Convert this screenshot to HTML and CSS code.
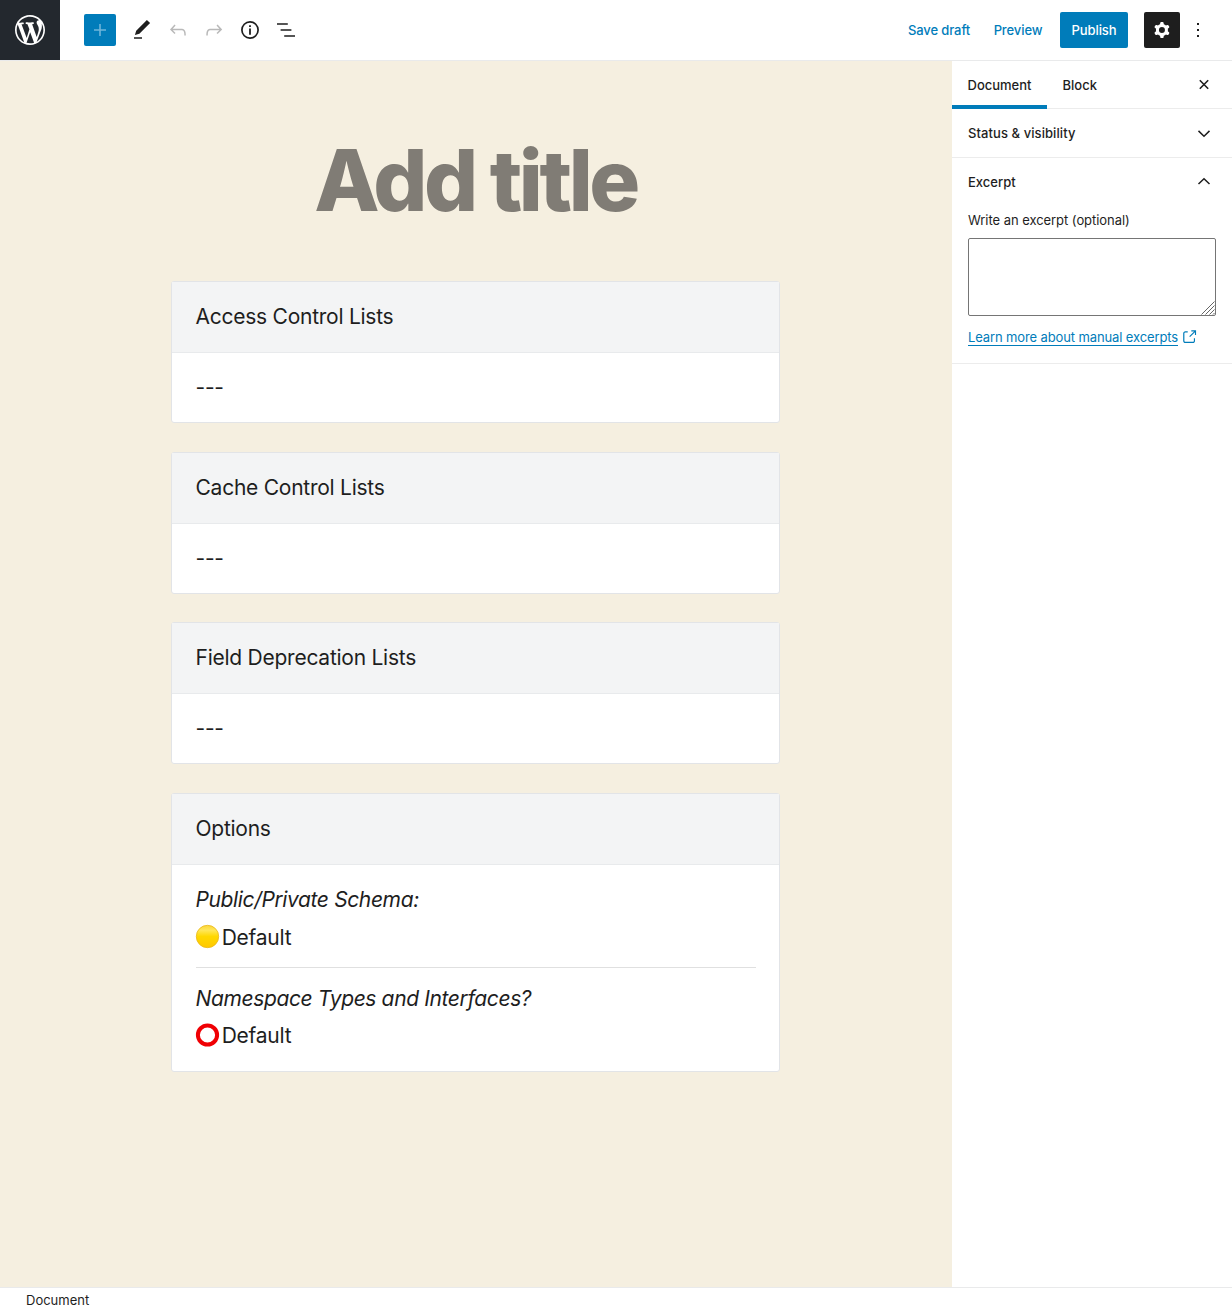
FILE: index.html
```html
<!DOCTYPE html>
<html lang="en">
<head>
<meta charset="utf-8">
<title>Edit post</title>
<link rel="stylesheet" href="styles.css">
</head>
<body>
<div class="editor">
  <header class="topbar">
    <a class="logo"><svg width="36" height="36" viewBox="-2 -2 24 24"><path d="M20 10c0-5.51-4.49-10-10-10C4.48 0 0 4.49 0 10c0 5.52 4.48 10 10 10 5.51 0 10-4.48 10-10zM7.78 15.37L4.37 6.22c.55-.02 1.17-.08 1.17-.08.5-.06.44-1.13-.06-1.11 0 0-1.45.11-2.37.11-.18 0-.37 0-.58-.01C4.12 2.69 6.87 1.11 10 1.11c2.33 0 4.45.87 6.05 2.34-.68-.11-1.65.39-1.65 1.58 0 .74.45 1.36.9 2.1.35.61.55 1.36.55 2.46 0 1.49-1.4 5-1.4 5l-3.03-8.37c.54-.02.82-.17.82-.17.5-.05.44-1.25-.06-1.22 0 0-1.44.12-2.38.12-.87 0-2.33-.12-2.33-.12-.5-.03-.56 1.2-.06 1.22l.92.08 1.26 3.41zM17.41 10c.24-.64.74-1.87.43-4.25.7 1.29 1.05 2.71 1.05 4.25 0 3.29-1.73 6.24-4.4 7.78.97-2.59 1.94-5.2 2.92-7.78zM6.1 18.09C3.12 16.65 1.11 13.53 1.11 10c0-1.3.23-2.48.72-3.59C3.25 10.3 4.67 14.2 6.1 18.09zm4.03-6.63l2.58 6.98c-.86.29-1.76.45-2.71.45-.79 0-1.57-.11-2.29-.33.81-2.38 1.62-4.74 2.42-7.1z"/></svg></a>
    <div class="tools">
      <button class="tool inserter"><svg width="24" height="24" viewBox="0 0 24 24"><path d="M18 11.2h-5.2V6h-1.6v5.2H6v1.6h5.2V18h1.6v-5.2H18z"/></svg></button>
      <button class="tool"><svg width="24" height="24" viewBox="0 0 24 24"><path d="M20.1 5.1L16.9 2 6.2 12.7l-1.3 4.4 4.5-1.3L20.1 5.1zM4 20.8h8v-1.5H4v1.5z"/></svg></button>
      <button class="tool disabled"><svg width="24" height="24" viewBox="0 0 24 24"><path d="M18.3 11.7c-.6-.6-1.4-.9-2.3-.9H6.7l2.9-3.3-1.1-1-4.5 5L8.5 16l1-1-2.7-2.7H16c.5 0 .9.2 1.3.5 1 1 1 3.4 1 4.5v.3h1.5v-.2c0-1.5 0-4.3-1.5-5.7z"/></svg></button>
      <button class="tool disabled"><svg width="24" height="24" viewBox="0 0 24 24"><path d="M15.6 6.5l-1.1 1 2.9 3.3H8c-.9 0-1.7.3-2.3.9-1.4 1.5-1.4 4.2-1.4 5.6v.2h1.5v-.3c0-1.1 0-3.5 1-4.5.3-.3.7-.5 1.3-.5h9.2L14.5 15l1.1 1.1 4.6-4.6-4.6-5z"/></svg></button>
      <button class="tool"><svg width="24" height="24" viewBox="0 0 24 24"><circle cx="12" cy="12" r="8.1" fill="none" stroke="currentColor" stroke-width="1.7"/><path d="M11.1 7.2h1.8V9h-1.8zM11.1 10.6h1.8v6.2h-1.8z"/></svg></button>
      <button class="tool"><svg width="24" height="24" viewBox="0 0 24 24"><path d="M13.8 5.2H3v1.5h10.8V5.2zm-3.6 12v1.5H21v-1.5H10.2zm7.2-6H6.6v1.5h10.8v-1.5z"/></svg></button>
    </div>
    <div class="actions">
      <button class="link save">Save draft</button>
      <button class="link preview">Preview</button>
      <button class="publish">Publish</button>
      <button class="cog"><svg width="24" height="24" viewBox="0 0 24 24"><path fill-rule="evenodd" d="M10.289 4.836A1 1 0 0111.275 4h1.306a1 1 0 01.987.836l.244 1.466c.787.26 1.503.679 2.108 1.218l1.393-.522a1 1 0 011.216.437l.653 1.13a1 1 0 01-.23 1.273l-1.148.944a6.025 6.025 0 010 2.435l1.149.946a1 1 0 01.23 1.272l-.653 1.13a1 1 0 01-1.216.437l-1.394-.522c-.605.54-1.32.958-2.108 1.218l-.244 1.466a1 1 0 01-.987.836h-1.306a1 1 0 01-.986-.836l-.244-1.466a5.995 5.995 0 01-2.108-1.218l-1.394.522a1 1 0 01-1.217-.436l-.653-1.131a1 1 0 01.23-1.272l1.149-.946a6.026 6.026 0 010-2.435l-1.148-.944a1 1 0 01-.23-1.272l.653-1.131a1 1 0 011.217-.437l1.393.522a5.994 5.994 0 012.108-1.218l.244-1.466zM14.929 12a3 3 0 11-6 0 3 3 0 016 0z"/></svg></button>
      <button class="more"><svg width="24" height="24" viewBox="0 0 24 24"><path d="M11 5h2v2h-2zM11 11h2v2h-2zM11 17h2v2h-2z"/></svg></button>
    </div>
  </header>

  <div class="body">
    <main class="canvas">
      <h1 class="title">Add title</h1>
      <section class="card">
        <h2 class="card-head">Access Control Lists</h2>
        <div class="card-body">---</div>
      </section>
      <section class="card">
        <h2 class="card-head">Cache Control Lists</h2>
        <div class="card-body">---</div>
      </section>
      <section class="card">
        <h2 class="card-head">Field Deprecation Lists</h2>
        <div class="card-body">---</div>
      </section>
      <section class="card">
        <h2 class="card-head">Options</h2>
        <div class="card-body options">
          <em>Public/Private Schema:</em>
          <p class="value"><svg class="dot" width="24" height="24" viewBox="0 0 24 24"><defs><linearGradient id="sun" x1="0" y1="0" x2="0" y2="1"><stop offset="0" stop-color="#fbd63a"/><stop offset=".22" stop-color="#ffe75a"/><stop offset=".5" stop-color="#ffd800"/><stop offset="1" stop-color="#ffc800"/></linearGradient></defs><circle cx="12.500" cy="11.500" r="11.200" fill="url(#sun)" stroke="#eab71a" stroke-width=".8"/></svg>Default</p>
          <hr>
          <em>Namespace Types and Interfaces?</em>
          <p class="value"><svg class="dot" width="24" height="24" viewBox="0 0 24 24"><circle cx="12.500" cy="12" r="9.600" fill="none" stroke="#f00004" stroke-width="4"/></svg>Default</p>
        </div>
      </section>
    </main>

    <aside class="sidebar">
      <div class="tabs">
        <button class="tab active">Document</button>
        <button class="tab">Block</button>
        <button class="close"><svg width="24" height="24" viewBox="0 0 24 24"><path d="M7.8 7.3l8.4 8.4M16.2 7.3l-8.400 8.400" stroke="currentColor" stroke-width="1.6"/></svg></button>
      </div>
      <div class="panel status">
        <h2 class="panel-head">Status &amp; visibility <svg width="24" height="24" viewBox="0 0 24 24"><path d="M17.500 9.900L12 15.200l-5.500-5.300" fill="none" stroke="currentColor" stroke-width="1.5"/></svg></h2>
      </div>
      <div class="panel excerpt">
        <h2 class="panel-head">Excerpt <svg width="24" height="24" viewBox="0 0 24 24"><path d="M6.500 14L12 8.700l5.500 5.300" fill="none" stroke="currentColor" stroke-width="1.5"/></svg></h2>
        <label class="label" for="excerpt">Write an excerpt (optional)</label>
        <div class="field">
          <textarea id="excerpt"></textarea>
          <svg class="grip" width="14" height="14" viewBox="0 0 14 14"><path d="M.5 13.5l13-13M4.5 13.5l9-9M8.5 13.5l5-5M12 13.5l1.500-1.500" fill="none" stroke="#666" stroke-width="1"/></svg>
        </div>
        <div class="learn"><a>Learn more about manual excerpts</a><svg width="18.200" height="18.200" viewBox="0 0 24 24"><path d="M18.2 17c0 .7-.6 1.2-1.2 1.2H7c-.7 0-1.2-.6-1.2-1.2V7c0-.7.6-1.2 1.2-1.2h3.2V4.2H7C5.5 4.2 4.2 5.500 4.200 7v10c0 1.500 1.200 2.800 2.800 2.800h10c1.500 0 2.800-1.200 2.800-2.800v-3.600h-1.500V17zM14.900 3v1.500h3.700l-6.400 6.400 1.100 1.100 6.400-6.400v3.700h1.500V3h-6.300z"/></svg></div>
      </div>
    </aside>
  </div>

  <footer class="footer">Document</footer>
</div>
</body>
</html>
```
FILE: styles.css
```css
* { box-sizing: border-box; }

body {
  margin: 0;
  background: #fff;
  color: #1e1e1e;
  font: 400 13px/18px Inter, "Liberation Sans", sans-serif;
}

svg { fill: currentColor; display: block; flex: none; }

button {
  margin: 0;
  padding: 0;
  border: 0;
  background: none;
  color: inherit;
  font: inherit;
  font-weight: 500;
  display: flex;
  align-items: center;
  justify-content: center;
  white-space: nowrap;
}

h1, h2, p { margin: 0; }

.editor { display: flex; flex-direction: column; height: 1312px; }

/* top bar */
.topbar { display: flex; height: 61px; border-bottom: 1px solid #e9eaeb; }
.logo { width: 60px; height: 60px; background: #23282e; color: #fff; display: flex; align-items: center; justify-content: center; }
.tools { display: flex; align-items: center; height: 60px; padding-left: 24px; }
.tool { width: 36px; height: 36px; }
.tool.inserter { width: 32px; height: 32px; margin-right: 8px; border-radius: 2px; background: #007cba; color: #6eb5da; }
.disabled { color: #b9b9b9; }
.actions { display: flex; align-items: center; height: 60px; margin-left: auto; padding-right: 16px; }
.link { color: #007cba; letter-spacing: -.1px; }
.save { width: 62px; }
.preview { width: 48px; margin-left: 24px; }
.publish { width: 68px; height: 36px; margin-left: 18px; border-radius: 2px; background: #007cba; color: #fff; letter-spacing: -.1px; }
.cog { width: 36px; height: 36px; margin-left: 16px; border-radius: 2px; background: #1e1e1e; color: #fff; }
.more { width: 36px; height: 36px; }

/* canvas */
.body { display: flex; flex: 1; min-height: 0; }
.canvas { flex: 1; display: flex; flex-direction: column; align-items: center; background: #f5efe0; padding: 67px 1px 0 0; font-size: 21px; letter-spacing: -.25px; }
.title { height: 153px; font-size: 85px; line-height: 106px; font-weight: 800; letter-spacing: -3.5px; color: #807c75; }
.card { width: 609px; margin-bottom: 28.7px; border: 1px solid #e2e4e7; border-radius: 3px; background: #fff; }
.card-head { height: 71px; padding: 0 23.500px; border-bottom: 1px solid #e8eaec; background: #f3f4f5; font-size: 21px; font-weight: 400; line-height: 69.300px; }
.card-body { height: 69px; padding: 0 23.500px; line-height: 69px; }
.options { height: 206px; padding-top: 16px; line-height: 37px; }
.options em { display: block; letter-spacing: -.37px; }
.options em:first-child { height: 37.800px; }
.value { display: flex; align-items: center; gap: 2.500px; }
.dot { margin-top: -1.500px; margin-left: -.3px; overflow: visible; }
.options hr { height: 1px; margin: 11.400px 0 11.900px; border: 0; background: #e0e0e0; }

/* sidebar */
.sidebar { width: 280px; background: #fff; }
.tabs { display: flex; height: 48px; border-bottom: 1px solid #ececec; }
.tab { height: 48px; padding: 0 15.500px; }
.tab.active { width: 95px; box-shadow: inset 0 -4px #007cba; }
.close { margin-left: auto; width: 24px; margin-right: 16px; }
.panel { border-bottom: 1px solid #ececec; }
.panel-head { display: flex; align-items: center; justify-content: space-between; height: 48px; padding: 0 16px; font-size: 13px; font-weight: 500; }
.status .panel-head { letter-spacing: .08px; }
.label { display: block; margin: 5px 16px 9px; letter-spacing: -.05px; }
.field { position: relative; width: 248px; height: 78px; margin-left: 16px; }
.field textarea { display: block; width: 100%; height: 100%; border: 1px solid #757575; border-radius: 2px; resize: none; }
.grip { position: absolute; right: 1px; bottom: 1px; }
.learn { display: flex; align-items: center; height: 18px; margin: 12px 16px 17px; color: #007cba; letter-spacing: -.12px; white-space: nowrap; }
.learn a { text-decoration: underline; text-underline-offset: 3px; text-decoration-thickness: 1px; }
.learn svg { margin-left: 1.500px; }

.footer { height: 25px; padding: 3px 26px 0; border-top: 1px solid #e9eaeb; }
```
